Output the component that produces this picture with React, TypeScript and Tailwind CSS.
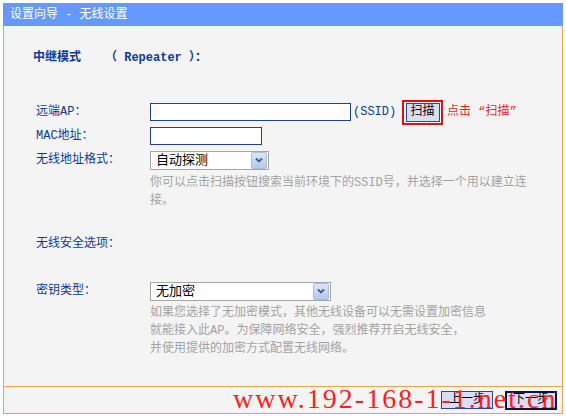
import React from "react";

const label = "text-[#0b3a9c] text-[12px]";
const help = "text-[#a3a3a3] text-[12px] leading-[18px]";

function Select({ value, width }: { value: string; width: string }) {
  return (
    <div className={`${width} h-[19px] flex items-center border border-[#a5a5a5] bg-white`}>
      <span className="flex-1 pl-[5px] text-[13px] text-black leading-none">{value}</span>
      <div className="w-[16px] h-[17px] mr-[1px] flex items-center justify-center border border-[#a9bde0] bg-gradient-to-b from-[#dbe6f8] to-[#b3c8ec] rounded-[2px]">
        <svg width="8" height="6" viewBox="0 0 8 6">
          <path d="M1 1.5 L4 4.5 L7 1.5" fill="none" stroke="#4a5d82" strokeWidth="1.8" />
        </svg>
      </div>
    </div>
  );
}

export default function App() {
  return (
    <div className="relative w-[566px] h-[416px] bg-white pt-[3px] pl-[3px] font-['Liberation_Mono','Noto_Sans_CJK_SC',monospace]">
      <div className="w-[560px]">
        <div className="h-[23px] bg-[#6699ff] flex items-center pl-[7px] text-white text-[12px]">
          设置向导 - 无线设置
        </div>

        <div className="h-[360px] bg-[#f4f4f4] border-l border-r border-[#f3a04e] pt-[22px]">
          <div className="h-[20px] flex items-center pl-[29px]">
            <span className={`${label} font-bold w-[72px]`}>中继模式</span>
            <span className={`${label} font-bold`}>（ Repeater ）：</span>
          </div>

          <div className="mt-[31px] h-[26px] flex items-center pl-[32px]">
            <span className={`${label} w-[114px]`}>远端AP：</span>
            <div className="w-[201px] h-[18px] border border-[#1d3f9f] bg-white" />
            <span className={`${label} ml-[2px] w-[49px]`}>(SSID)</span>
            <div className="w-[41px] h-[25px] border-2 border-[#e01010] flex items-center justify-center">
              <button className="w-[34px] h-[19px] border border-[#2a46a6] bg-[#dcdcf6] text-[12px] text-black leading-none">
                扫描
              </button>
            </div>
            <span className="ml-[4px] text-[12px] text-[#ff1a1a]">点击 “扫描”</span>
          </div>

          <div className="h-[22px] flex items-center pl-[32px]">
            <span className={`${label} w-[114px]`}>MAC地址：</span>
            <div className="w-[112px] h-[18px] border border-[#1d3f9f] bg-white" />
          </div>

          <div className="mt-[1px] h-[24px] flex items-center pl-[32px]">
            <span className={`${label} w-[114px]`}>无线地址格式：</span>
            <Select value="自动探测" width="w-[119px]" />
          </div>

          <div className={`mt-[2px] pl-[146px] ${help}`}>
            你可以点击扫描按钮搜索当前环境下的SSID号，并选择一个用以建立连
            <br />
            接。
          </div>

          <div className="mt-[24px] h-[20px] flex items-center pl-[32px]">
            <span className={label}>无线安全选项：</span>
          </div>

          <div className="mt-[25px] h-[24px] flex items-center pl-[32px]">
            <span className={`${label} w-[114px]`}>密钥类型：</span>
            <Select value="无加密" width="w-[181px]" />
          </div>

          <div className={`mt-[1px] pl-[146px] ${help}`}>
            如果您选择了无加密模式，其他无线设备可以无需设置加密信息
            <br />
            就能接入此AP。为保障网络安全，强烈推荐开启无线安全，
            <br />
            并使用提供的加密方式配置无线网络。
          </div>
        </div>

        <div className="h-[28px] bg-[#f4f4f4] border border-[#f3a04e] flex items-center justify-end pr-[5px] gap-[12px]">
          <button className="w-[52px] h-[18px] border border-[#2a46a6] bg-[#dcdcf6] text-[12px] text-black leading-none">
            上一步
          </button>
          <button className="w-[52px] h-[19px] border-2 border-[#0c1640] bg-[#dcdcf6] text-[12px] text-black leading-none">
            下一步
          </button>
        </div>
      </div>

      <div className="absolute left-[233px] top-[385px] text-[28px] leading-[28px] tracking-[2px] text-[#ff2020] font-['Liberation_Serif',serif] whitespace-nowrap pointer-events-none">
        www.192-168-1-1.net.cn
      </div>
    </div>
  );
}
